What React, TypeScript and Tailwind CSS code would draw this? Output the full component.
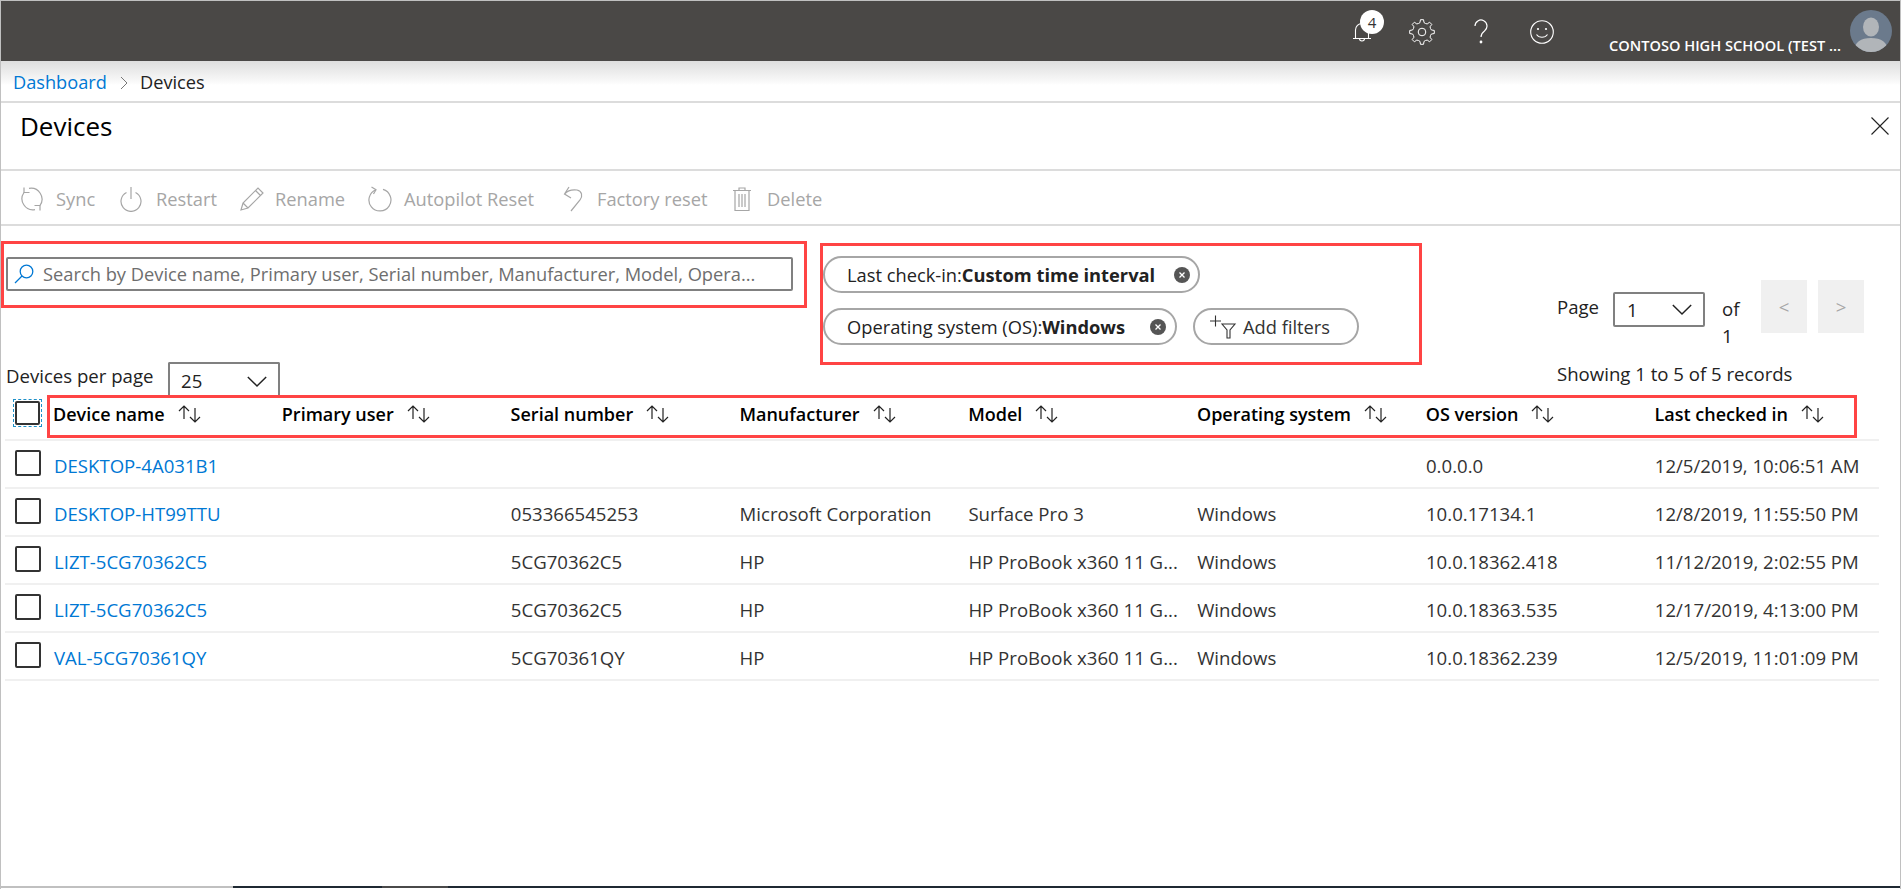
import React from "react";

const columns = ["Device name", "Primary user", "Serial number", "Manufacturer", "Model", "Operating system", "OS version", "Last checked in"];

const rows = [
  ["DESKTOP-4A031B1", "", "", "", "", "", "0.0.0.0", "12/5/2019, 10:06:51 AM"],
  ["DESKTOP-HT99TTU", "", "053366545253", "Microsoft Corporation", "Surface Pro 3", "Windows", "10.0.17134.1", "12/8/2019, 11:55:50 PM"],
  ["LIZT-5CG70362C5", "", "5CG70362C5", "HP", "HP ProBook x360 11 G...", "Windows", "10.0.18362.418", "11/12/2019, 2:02:55 PM"],
  ["LIZT-5CG70362C5", "", "5CG70362C5", "HP", "HP ProBook x360 11 G...", "Windows", "10.0.18363.535", "12/17/2019, 4:13:00 PM"],
  ["VAL-5CG70361QY", "", "5CG70361QY", "HP", "HP ProBook x360 11 G...", "Windows", "10.0.18362.239", "12/5/2019, 11:01:09 PM"],
];

function gearPath() {
  const cx = 13;
  const cy = 13;
  const teeth = 8;
  const pts: string[] = [];
  for (let i = 0; i < teeth; i++) {
    const a = (i / teeth) * Math.PI * 2 - Math.PI / 2;
    const step = (Math.PI * 2) / teeth;
    const list: [number, number][] = [
      [9.2, a - step * 0.5],
      [9.6, a - step * 0.27],
      [12.4, a - step * 0.16],
      [12.4, a + step * 0.16],
      [9.6, a + step * 0.27],
    ];
    for (const [r, t] of list) {
      pts.push(`${(cx + r * Math.cos(t)).toFixed(2)} ${(cy + r * Math.sin(t)).toFixed(2)}`);
    }
  }
  return `M${pts.join("L")}Z`;
}

function Chevron({ className }: { className: string }) {
  return (
    <svg viewBox="0 0 24 14" className={className} fill="none" stroke="#222" strokeWidth="1.6">
      <path d="M2 2l10 10L22 2" />
    </svg>
  );
}

function SortIcon() {
  return (
    <svg viewBox="0 0 25 18" className="ml-[12px] h-[18px] w-[25px] shrink-0" fill="none" stroke="#222" strokeWidth="1.2">
      <path d="M7 14V1M2 6l5-5 5 5" />
      <path d="M18 3v14M13 12l5 5 5-5" />
    </svg>
  );
}

function ToolItem({ icon, label, className }: { icon: React.ReactNode; label: string; className: string }) {
  return (
    <div className={`flex items-center ${className}`}>
      {icon}
      <span className="whitespace-nowrap text-[18.3px] text-[#a6a6a6]">{label}</span>
    </div>
  );
}

function ChipClose() {
  return (
    <svg viewBox="0 0 16 16" className="h-[16px] w-[16px] shrink-0">
      <circle cx="8" cy="8" r="8" fill="#555" />
      <path d="M5.5 5.5l5 5M10.5 5.5l-5 5" stroke="#fff" strokeWidth="1.3" />
    </svg>
  );
}

export default function App() {
  return (
    <div className="flex h-[889px] w-full flex-col overflow-hidden border-l border-r border-t border-[#c0c0c0] bg-white font-['Open_Sans',sans-serif] text-[#222]">
      <header className="flex h-[60px] shrink-0 items-start bg-[#4a4846] text-white">
        <div className="relative ml-[1351px] mt-[19px] h-[24px] w-[20px]">
          <svg viewBox="0 0 20 24" className="h-[24px] w-[20px]" fill="none" stroke="#fff" strokeWidth="1.1">
            <path d="M1 18.5h18M3.5 18.5V10a6.5 6.5 0 0 1 13 0v8.5M7.5 18.5a2.5 2.5 0 0 0 5 0" />
          </svg>
          <span className="absolute left-[8px] top-[-10px] flex h-[24px] w-[24px] items-center justify-center rounded-full bg-white text-[15px] text-[#333]">4</span>
        </div>
        <svg viewBox="0 0 26 26" className="ml-[37px] mt-[18px] h-[26px] w-[26px]" fill="none" stroke="#fff" strokeWidth="1" strokeLinejoin="round">
          <path d={gearPath()} />
          <circle cx="13" cy="13" r="3.8" />
        </svg>
        <svg viewBox="0 0 16 26" className="ml-[38px] mt-[18px] h-[26px] w-[16px]" fill="none" stroke="#fff" strokeWidth="1.2">
          <path d="M2 7a6 6 0 1 1 9.5 4.9C9 13.7 8 14.8 8 18" />
          <circle cx="8" cy="23" r=".8" fill="#fff" />
        </svg>
        <svg viewBox="0 0 24 24" className="ml-[41px] mt-[19px] h-[24px] w-[24px]" fill="none" stroke="#fff" strokeWidth="1.1">
          <circle cx="12" cy="12" r="11.3" />
          <circle cx="8" cy="9" r="1.1" fill="#fff" stroke="none" />
          <circle cx="16" cy="9" r="1.1" fill="#fff" stroke="none" />
          <path d="M6.5 14.5c2.5 3.7 8.5 3.7 11 0" />
        </svg>
        <span className="ml-[55px] mt-[34px] w-[234px] whitespace-nowrap text-[14.6px] font-semibold leading-[20px]">CONTOSO HIGH SCHOOL (TEST ...</span>
        <svg viewBox="0 0 42 42" className="ml-[7px] mt-[9px] h-[42px] w-[42px]">
          <defs>
            <clipPath id="avatar-clip">
              <circle cx="21" cy="21" r="21" />
            </clipPath>
          </defs>
          <circle cx="21" cy="21" r="21" fill="#6b7a8c" />
          <g clipPath="url(#avatar-clip)" fill="#b1b5b9">
            <ellipse cx="21" cy="17" rx="8" ry="9.5" />
            <path d="M4 42c0-10 7-14 17-14s17 4 17 14z" />
          </g>
        </svg>
      </header>

      <nav className="flex h-[40px] shrink-0 items-center bg-gradient-to-b from-[#dedede] via-[#f8f8f8] to-white to-60% pl-[12px] pt-[3px] text-[18.2px]">
        <span className="w-[94px] text-[#0078d4]">Dashboard</span>
        <svg viewBox="0 0 8 14" className="ml-[13px] h-[14px] w-[8px]" fill="none" stroke="#777" strokeWidth="1">
          <path d="M1 1l6 6-6 6" />
        </svg>
        <span className="ml-[12px]">Devices</span>
      </nav>

      <section className="flex h-[68px] shrink-0 items-start justify-between border-t-2 border-[#dcdcdc] pl-[19px]">
        <h1 className="mt-[5px] text-[26px] font-medium leading-[36px] text-black">Devices</h1>
        <svg viewBox="0 0 18 18" className="mr-[11px] mt-[14px] h-[18px] w-[18px]" fill="none" stroke="#222" strokeWidth="1.1">
          <path d="M.5.5l17 17M17.5.5l-17 17" />
        </svg>
      </section>

      <div className="flex h-[55px] shrink-0 items-center border-t-2 border-[#dcdcdc] pl-[19px] pt-[3px]">
        <ToolItem
          className="w-[100px]"
          label="Sync"
          icon={
            <svg viewBox="0 0 24 26" className="mr-[12px] h-[26px] w-[24px]" fill="none" stroke="#a6a6a6" strokeWidth="1.2">
              <path d="M4 6.5A11 11 0 0 0 15 23.6M20 19.5A11 11 0 0 0 9 2.4" />
              <path d="M4 1.5v5h5.5M20 24.5v-5h-5.5" />
            </svg>
          }
        />
        <ToolItem
          className="w-[120px]"
          label="Restart"
          icon={
            <svg viewBox="0 0 22 26" className="mr-[14px] h-[26px] w-[22px]" fill="none" stroke="#a6a6a6" strokeWidth="1.2">
              <path d="M6.5 6.5a10 10 0 1 0 9 0M11 1v12" />
            </svg>
          }
        />
        <ToolItem
          className="w-[128px]"
          label="Rename"
          icon={
            <svg viewBox="0 0 24 24" className="mr-[11px] h-[24px] w-[24px]" fill="none" stroke="#a6a6a6" strokeWidth="1.2">
              <path d="M1 23l2-7L18 1l5 5L8 21z M3 16l5 5M15.5 3.5l5 5" />
            </svg>
          }
        />
        <ToolItem
          className="w-[195px]"
          label="Autopilot Reset"
          icon={
            <svg viewBox="0 0 24 26" className="mr-[12px] h-[26px] w-[24px]" fill="none" stroke="#a6a6a6" strokeWidth="1.2">
              <path d="M8 3.7a11 11 0 1 0 7-.3" />
              <path d="M3.5 1l4.500 2.700L5.500 8" />
            </svg>
          }
        />
        <ToolItem
          className="w-[170px]"
          label="Factory reset"
          icon={
            <svg viewBox="0 0 20 26" className="mr-[14px] h-[26px] w-[20px]" fill="none" stroke="#a6a6a6" strokeWidth="1.2">
              <path d="M6 1L1.500 8l6.500 4M1.500 8C5 4 10 3.500 14 4c5 1 6 6 3 10l-9 11" />
            </svg>
          }
        />
        <ToolItem
          className="w-[120px]"
          label="Delete"
          icon={
            <svg viewBox="0 0 18 24" className="mr-[16px] h-[24px] w-[18px]" fill="none" stroke="#a6a6a6" strokeWidth="1.2">
              <path d="M0 3.5h18M2 3.5v20h14v-20M6 3.5V1h6v2.5M6 7v13M9 7v13M12 7v13" />
            </svg>
          }
        />
      </div>

      <div className="flex h-[171px] shrink-0 items-start border-t-2 border-[#dcdcdc]">
        <div className="flex w-[806px] shrink-0 flex-col">
          <div className="mt-[15px] h-[67px] border-[3px] border-[#ff4444] pl-[2px] pt-[13px]">
            <div className="flex h-[34px] w-[787px] items-center rounded-[2px] border-2 border-[#808080] pl-[6px]">
              <svg viewBox="0 0 20 20" className="mr-[9px] h-[20px] w-[20px] shrink-0" fill="none" stroke="#0078d4" strokeWidth="1.3">
                <circle cx="12.5" cy="7.5" r="6.3" />
                <path d="M8 12L1 19" />
              </svg>
              <span className="whitespace-nowrap text-[18.3px] text-[#6e6e6e]">Search by Device name, Primary user, Serial number, Manufacturer, Model, Opera...</span>
            </div>
          </div>
          <div className="mt-[54px] flex h-[33px] items-start">
            <span className="ml-[5px] mt-[1px] w-[162px] shrink-0 whitespace-nowrap text-[18.6px] leading-[26px]">Devices per page</span>
            <div className="flex h-[33px] w-[112px] shrink-0 items-center justify-between rounded-t-[2px] border-2 border-b-0 border-[#808080] pl-[11px] pr-[10px] text-[18.6px]">
              <span className="mt-[2px]">25</span>
              <Chevron className="mt-[4px] h-[13px] w-[22px]" />
            </div>
          </div>
        </div>

        <div className="ml-[13px] mt-[17px] flex h-[122px] w-[602px] shrink-0 flex-col gap-[15px] border-[3px] border-[#ff4444] pt-[10px]">
          <div className="flex h-[37px] w-[377px] items-center rounded-full border-2 border-[#a6a6a6] pl-[22px] pr-[8px] text-[18.3px]">
            <span className="whitespace-nowrap">Last check-in:<b className="font-bold">Custom time interval</b></span>
            <span className="ml-auto"><ChipClose /></span>
          </div>
          <div className="flex gap-[16px]">
            <div className="flex h-[37px] w-[354px] items-center rounded-full border-2 border-[#a6a6a6] pl-[22px] pr-[9px] text-[18.3px]">
              <span className="whitespace-nowrap">Operating system (OS):<b className="font-bold">Windows</b></span>
              <span className="ml-auto"><ChipClose /></span>
            </div>
            <div className="flex h-[37px] w-[166px] items-center rounded-full border-2 border-[#a6a6a6] pl-[14px] text-[18.3px] text-[#333]">
              <svg viewBox="0 0 28 24" className="mr-[6px] h-[24px] w-[28px] shrink-0" fill="none" stroke="#333" strokeWidth="1.1">
                <path d="M1 6h11M6.5 .5v11M13 9h13l-5 6v8h-3v-8z" />
              </svg>
              <span>Add filters</span>
            </div>
          </div>
        </div>

        <div className="ml-[135px] mt-[54px] flex w-[320px] shrink-0 flex-col">
          <div className="flex h-[64px] items-start">
            <span className="mt-[14px] w-[56px] shrink-0 text-[18.6px] leading-[26px]">Page</span>
            <div className="mt-[12px] flex h-[35px] w-[92px] shrink-0 items-center justify-between rounded-[2px] border-2 border-[#808080] pl-[12px] pr-[10px] text-[18.6px]">
              <span>1</span>
              <Chevron className="h-[13px] w-[22px]" />
            </div>
            <div className="ml-[17px] mt-[15px] w-[24px] text-[18.6px] leading-[27px]">of 1</div>
            <div className="ml-[15px] flex h-[53px] w-[46px] items-center justify-center bg-[#f0f0f0] text-[18.6px] text-[#a6a6a6]">&lt;</div>
            <div className="ml-[11px] flex h-[53px] w-[46px] items-center justify-center bg-[#f0f0f0] text-[18.6px] text-[#a6a6a6]">&gt;</div>
          </div>
          <span className="mt-[17px] whitespace-nowrap text-[18.6px] leading-[26px]">Showing 1 to 5 of 5 records</span>
        </div>
      </div>

      <div className="flex h-[44px] shrink-0 items-start">
        <div className="ml-[12px] mt-[4px] h-[28px] w-[29px] shrink-0 border border-dashed border-[#1e90c8] p-px">
          <div className="h-full w-full rounded-[2px] border-2 border-[#333]" />
        </div>
        <div className="ml-[5px] flex h-[43px] w-[1810px] shrink-0 items-center border-[3px] border-[#ff4444] pb-[5px] pl-[3px]">
          {columns.map((c) => (
            <div key={c} className="flex w-[228.8px] shrink-0 items-center">
              <span className="whitespace-nowrap text-[18px] font-semibold text-black">{c}</span>
              <SortIcon />
            </div>
          ))}
        </div>
      </div>

      <div className="ml-[4px] w-[1874px] border-t-2 border-[#f0f0f0]">
        {rows.map((r, i) => (
          <div key={i} className="flex h-[48px] items-start border-b-2 border-[#f0f0f0]">
            <div className="ml-[10px] mt-[9px] h-[26px] w-[26px] shrink-0 rounded-[2px] border-2 border-[#333]" />
            <div className="ml-[13px] flex h-full items-center pt-[4px]">
              {r.map((cell, j) => (
                <div key={j} className={`whitespace-nowrap text-[18.6px] ${j === 0 ? "w-[228px] text-[#0078d4]" : "w-[228.8px] text-[#333]"}`}>
                  {cell}
                </div>
              ))}
            </div>
          </div>
        ))}
      </div>

      <div className="mt-auto flex h-[2px] shrink-0 translate-y-[-1px]">
        <div className="w-[232px] bg-[#c0c0c0]" />
        <div className="w-[149px] bg-[#1f2933]" />
        <div className="w-[66px] bg-[#4a4a4a]" />
        <div className="flex-1 bg-[#1f2933]" />
      </div>
    </div>
  );
}
